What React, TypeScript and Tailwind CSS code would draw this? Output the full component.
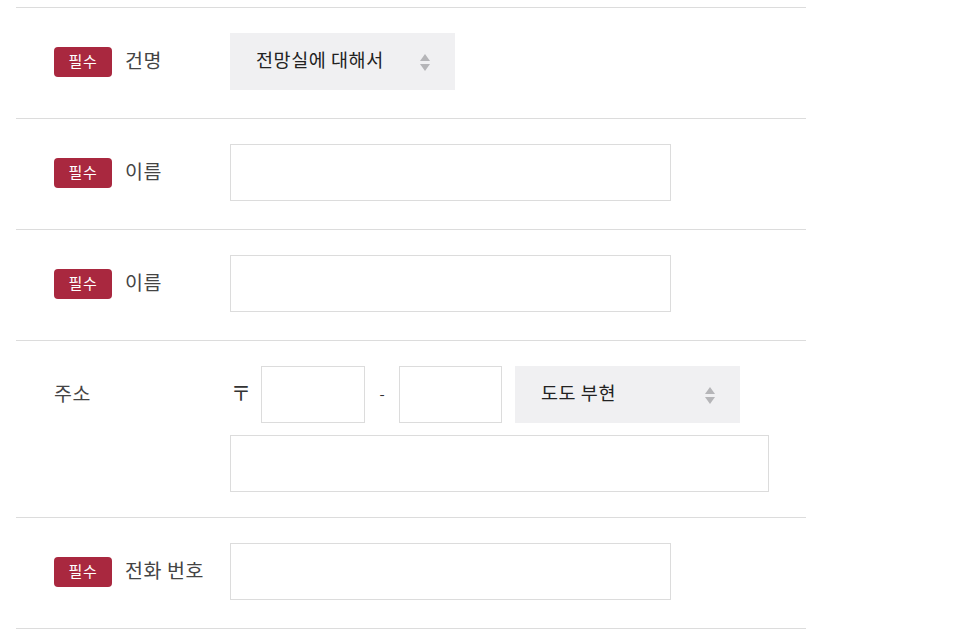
import React from "react";

const font = { fontFamily: '"Noto Sans CJK KR", "Noto Sans", sans-serif' };

function Badge() {
  return (
    <span className="inline-flex h-[30px] w-[58px] items-center justify-center rounded-[4px] bg-[#a9283f] text-[15px] tracking-[0.04em] text-white">
      필수
    </span>
  );
}

function Arrows() {
  return (
    <svg width="10" height="20" viewBox="0 0 10 20" className="shrink-0">
      <polygon points="5,2 10,9 0,9" fill="#b5b5b8" />
      <polygon points="0,12 10,12 5,19" fill="#b5b5b8" />
    </svg>
  );
}

function Select({ value }: { value: string }) {
  return (
    <div className="flex h-[57px] w-[225px] items-center justify-between bg-[#f0f0f2] pl-[26px] pr-[25px] text-[18.5px] tracking-[0.03em] text-[#222]">
      <span className="-translate-y-[2px]">{value}</span>
      <Arrows />
    </div>
  );
}

function Input({ w }: { w: string }) {
  return <div className={`h-[57px] border border-[#dcdcdc] bg-white ${w}`} />;
}

function Label({ req, text }: { req?: boolean; text: string }) {
  return (
    <div className="flex h-[57px] w-[176px] shrink-0 items-center gap-[13px] text-[19.5px] tracking-[0.03em] text-[#444]">
      {req && <Badge />}
      <span className="-translate-y-[2px]">{text}</span>
    </div>
  );
}

function Row({ children }: { children: React.ReactNode }) {
  return (
    <div className="flex border-b border-[#dcdcdc] pb-[28px] pl-[38px] pt-[25px]">{children}</div>
  );
}

export default function App() {
  return (
    <div className="min-h-[638px] bg-white pt-[7px]" style={font}>
      <div className="ml-[16px] w-[790px] border-t border-[#dcdcdc]">
        <Row>
          <Label req text="건명" />
          <Select value="전망실에 대해서" />
        </Row>
        <Row>
          <Label req text="이름" />
          <Input w="w-[441px]" />
        </Row>
        <Row>
          <Label req text="이름" />
          <Input w="w-[441px]" />
        </Row>
        <div className="flex border-b border-[#dcdcdc] pb-[25px] pl-[38px] pt-[25px]">
          <Label text="주소" />
          <div className="flex flex-col gap-[12px]">
            <div className="flex items-center">
              <span className="w-[31px] -translate-y-[2px] pl-[1px] text-[20px] text-[#333]">〒</span>
              <Input w="w-[104px]" />
              <span className="w-[34px] text-center text-[15px] text-[#333]">-</span>
              <Input w="w-[103px]" />
              <div className="ml-[13px]">
                <Select value="도도 부현" />
              </div>
            </div>
            <Input w="w-[539px]" />
          </div>
        </div>
        <Row>
          <Label req text="전화 번호" />
          <Input w="w-[441px]" />
        </Row>
      </div>
    </div>
  );
}
